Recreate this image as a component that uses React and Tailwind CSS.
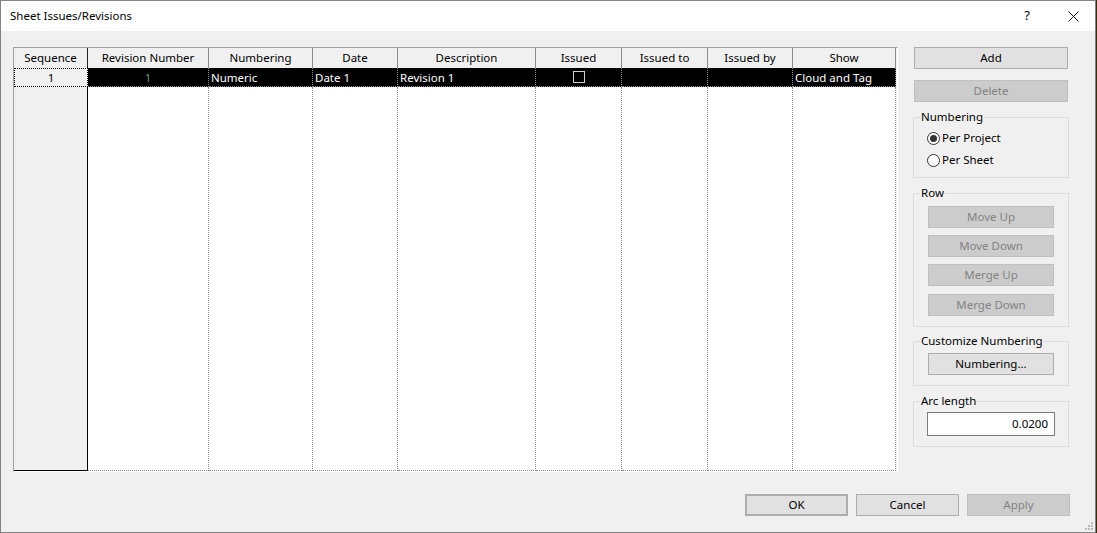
import React from 'react';

const FONT = { fontFamily: '"Noto Sans", "Open Sans", Arial, sans-serif' };

const GRID = 'grid grid-cols-[74px_121px_104px_85px_138px_86px_86px_85px_103px]';

const HEADERS = [
  'Sequence',
  'Revision Number',
  'Numbering',
  'Date',
  'Description',
  'Issued',
  'Issued to',
  'Issued by',
  'Show',
];

function Btn({ children, disabled, className = '' }) {
  return (
    <div
      className={`flex items-center justify-center h-[22px] border text-[11.5px] ${
        disabled
          ? 'bg-[#cccccc] border-[#bfbfbf] text-[#838383]'
          : 'bg-[#e1e1e1] border-[#adadad] text-black'
      } ${className}`}
    >
      {children}
    </div>
  );
}

function Group({ label, className = '', children }) {
  return (
    <div className={`border border-[#dcdcdc] flex flex-col ${className}`}>
      <span className="-mt-[9px] ml-[6px] px-px bg-[#f0f0f0] w-fit leading-[16px] text-[11.5px] text-black">
        {label}
      </span>
      {children}
    </div>
  );
}

function Radio({ checked, label, className = '' }) {
  return (
    <div className={`flex items-center gap-[2px] pl-[13px] h-[16px] ${className}`}>
      <span className="w-[13px] h-[13px] rounded-full border border-[#333] bg-white flex items-center justify-center">
        {checked && <span className="w-[7px] h-[7px] rounded-full bg-[#333]" />}
      </span>
      <span className="text-[11.5px] text-black">{label}</span>
    </div>
  );
}

function Table() {
  return (
    <div className="w-[885px] h-[425px] flex flex-col border-l border-t border-[#a0a0a0] border-r border-b border-r-white border-b-white">
      {/* header */}
      <div className={`${GRID} h-[20px] bg-[#f0f0f0]`}>
        {HEADERS.map((h, i) => (
          <div
            key={h}
            className={`flex items-center justify-center text-[11.5px] text-black border-r ${
              i === 0 ? 'border-[#222]' : 'border-[#8a8a8a]'
            }`}
          >
            {h}
          </div>
        ))}
      </div>

      {/* selected row */}
      <div className={`${GRID} h-[19px]`}>
        <div className="flex items-center justify-center bg-[#f0f0f0] border border-dotted border-black text-[11.5px] text-black">
          1
        </div>
        <div className="flex items-center justify-center bg-black border-r border-b border-dotted border-[#8a8a8a] text-[11.5px] text-[#6f9a6f]">
          1
        </div>
        {['Numeric', 'Date 1', 'Revision 1'].map((t) => (
          <div
            key={t}
            className="flex items-center pl-[2px] bg-black border-r border-b border-dotted border-[#8a8a8a] text-[11.5px] text-white"
          >
            {t}
          </div>
        ))}
        <div className="flex items-center justify-center bg-black border-r border-b border-dotted border-[#8a8a8a]">
          <span className="w-[12px] h-[12px] border border-[#d0d0d0]" />
        </div>
        <div className="bg-black border-r border-b border-dotted border-[#8a8a8a]" />
        <div className="bg-black border-r border-b border-dotted border-[#8a8a8a]" />
        <div className="flex items-center pl-[2px] bg-black border-r border-b border-dotted border-[#8a8a8a] text-[11.5px] text-white">
          Cloud and Tag
        </div>
      </div>

      {/* empty area */}
      <div className={`${GRID} flex-1`}>
        <div className="bg-[#f0f0f0] border-r border-b border-black" />
        {HEADERS.slice(1).map((h) => (
          <div key={h} className="bg-white border-r border-b border-dotted border-[#8a8a8a]" />
        ))}
      </div>
    </div>
  );
}

export default function App() {
  return (
    <div className="w-[1097px] h-[533px] bg-[#3b2b0e]" style={FONT}>
      <div className="relative w-[1096px] h-[533px] border border-[#838383] bg-[#f0f0f0] flex flex-col">
        {/* title bar */}
        <div className="h-[30px] bg-white flex items-center shrink-0">
          <span className="ml-[9px] text-[11.5px] text-black">Sheet Issues/Revisions</span>
          <span className="ml-auto mr-[38px] text-[13px] text-black">?</span>
          <svg width="11" height="11" viewBox="0 0 11 11" className="mr-[16px]">
            <path d="M0.5 0.5 L10.5 10.5 M10.5 0.5 L0.5 10.5" stroke="#111" strokeWidth="1" />
          </svg>
        </div>

        {/* body */}
        <div className="flex pt-[16px] pl-[12px]">
          <Table />

          <div className="ml-[15px] w-[156px] flex flex-col">
            <Btn className="mx-px">Add</Btn>
            <Btn disabled className="mx-px mt-[11px] h-[21px]">Delete</Btn>

            <Group label="Numbering" className="mt-[15px] h-[61px]">
              <Radio checked label="Per Project" className="mt-[5px]" />
              <Radio label="Per Sheet" className="mt-[6px]" />
            </Group>

            <Group label="Row" className="mt-[15px] h-[134px]">
              <div className="flex flex-col gap-[7px] px-[14px] mt-[5px]">
                <Btn disabled>Move Up</Btn>
                <Btn disabled>Move Down</Btn>
                <Btn disabled>Merge Up</Btn>
                <Btn disabled className="mt-px">Merge Down</Btn>
              </div>
            </Group>

            <Group label="Customize Numbering" className="mt-[14px] h-[45px]">
              <div className="px-[14px] mt-[4px]">
                <Btn>Numbering...</Btn>
              </div>
            </Group>

            <Group label="Arc length" className="mt-[15px] h-[46px]">
              <div className="px-[13px] mt-[3px]">
                <div className="h-[24px] bg-white border border-[#7a7a7a] flex items-center justify-end pr-[6px] text-[11.5px] text-black">
                  0.0200
                </div>
              </div>
            </Group>
          </div>
        </div>

        {/* footer */}
        <div className="flex justify-end gap-[8px] mt-[22px] pr-[25px]">
          <Btn className="w-[103px] border-2 border-[#0078d7]">OK</Btn>
          <Btn className="w-[103px]">Cancel</Btn>
          <Btn disabled className="w-[103px]">Apply</Btn>
        </div>

        {/* resize grip */}
        <svg width="10" height="10" viewBox="0 0 10 10" className="absolute right-[1px] bottom-[1px]">
          <rect x="7" y="1" width="2" height="2" fill="#b8b8b8" />
          <rect x="4" y="4" width="2" height="2" fill="#b8b8b8" />
          <rect x="7" y="4" width="2" height="2" fill="#b8b8b8" />
          <rect x="1" y="7" width="2" height="2" fill="#b8b8b8" />
          <rect x="4" y="7" width="2" height="2" fill="#b8b8b8" />
          <rect x="7" y="7" width="2" height="2" fill="#b8b8b8" />
        </svg>
      </div>
    </div>
  );
}
